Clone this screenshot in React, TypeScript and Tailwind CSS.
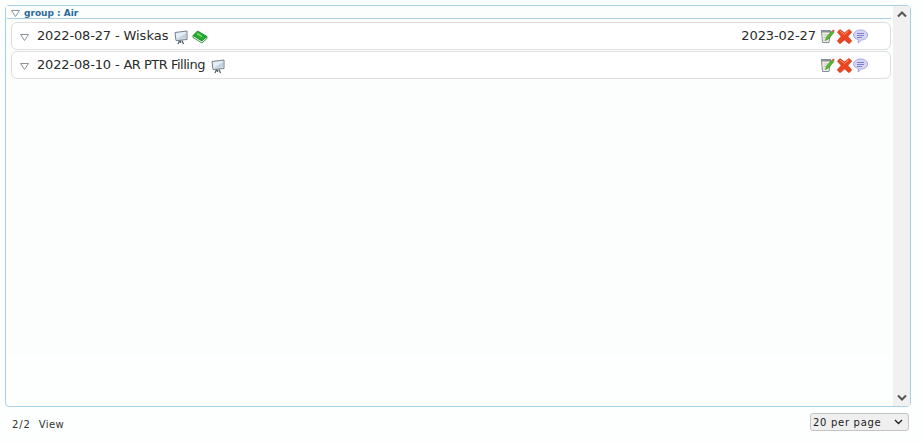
import React from "react";

const Triangle: React.FC<{ className?: string }> = ({ className }) => (
  <svg width="9" height="7" viewBox="0 0 9 7" className={className}>
    <path d="M0.5 0.5H8.5L4.5 6.5Z" fill="#fff" stroke="#8a9299" strokeWidth="1" />
  </svg>
);

const Board: React.FC = () => (
  <svg width="14" height="15" viewBox="0 0 14 15" className="shrink-0">
    <path d="M1 2.5L13 1V9.5L2 10.5Z" fill="#e4edf5" stroke="#75808a" />
    <path d="M3 9L12 3V8.6Z" fill="#c3d2e0" />
    <path d="M6.5 10.5V13M5.5 10.5L4 14M8 10.5L9.5 14" stroke="#59626b" strokeWidth="1.3" fill="none" />
  </svg>
);

const Book: React.FC = () => (
  <svg width="16" height="14" viewBox="0 0 16 14" className="shrink-0">
    <path d="M1 5.5L5.5 1 15 6.5 10 11Z" fill="#22ad2e" stroke="#12801e" strokeWidth="0.8" />
    <path d="M1 5.5V7.5L10 13 15 8.5V6.5L10 11Z" fill="#eef6ea" stroke="#12801e" strokeWidth="0.8" />
    <path d="M5 3.5L10 6.5" stroke="#8fe58f" strokeWidth="1.2" fill="none" />
  </svg>
);

const EditIcon: React.FC = () => (
  <svg width="15" height="15" viewBox="0 0 15 15" className="shrink-0">
    <path d="M1.5 2.5H10.5L9 13.5H2.5Z" fill="#f3efda" stroke="#7f8f9c" />
    <rect x="1" y="1" width="10" height="2.5" fill="#87919b" />
    <path d="M3.5 6h5M3.5 8.5h3M3.5 11h2" stroke="#b5bec6" />
    <path d="M5.5 11.5L6.5 8 12 2 14 3.5 8.5 10Z" fill="#55b92c" stroke="#2e7d18" strokeWidth="0.5" />
    <path d="M12 1.8L13.8 3.2 14.8 1.8 13.2 .6Z" fill="#e0513a" />
  </svg>
);

const DeleteIcon: React.FC = () => (
  <svg width="15" height="15" viewBox="0 0 15 15" className="shrink-0">
    <path
      d="M3 .6L7.5 3.8 12 .4 14.8 3 11 7.5 14.8 12 12 14.8 7.5 11 3 14.8 .2 12 4 7.5 .4 3z"
      fill="#ea4420"
      stroke="#d23a1a"
      strokeWidth="0.6"
    />
    <path d="M3 2.2L7.5 5.4 11.5 2.2" stroke="#f79a78" fill="none" />
  </svg>
);

const CommentIcon: React.FC = () => (
  <svg width="15" height="15" viewBox="0 0 15 15" className="shrink-0">
    <path
      d="M7.5 1C11.5 1 14.5 3 14.5 6S11.5 11 8.5 11L5 14 5.5 10.6C2.5 10 .5 8.4 .5 6S3.5 1 7.5 1z"
      fill="#d4d4f4"
      stroke="#a8a8dc"
    />
    <path d="M4 4.5h7M4 6.5h7M4 8.5h5" stroke="#8080cc" />
  </svg>
);

const Chevron: React.FC<{ up?: boolean }> = ({ up }) => (
  <svg width="10" height="7" viewBox="0 0 10 7">
    <path d={up ? "M1 5.5L5 1.5 9 5.5" : "M1 1.5L5 5.5 9 1.5"} fill="none" stroke="#555" strokeWidth="2" />
  </svg>
);

type RowProps = {
  date: string;
  name: string;
  nameClass: string;
  book?: boolean;
  end?: string;
};

const Row: React.FC<RowProps> = ({ date, name, nameClass, book, end }) => (
  <div className="flex h-[28px] items-center rounded-[6px] border border-[#dcdedf] bg-white pl-[8px] pr-[22px]">
    <Triangle className="mt-[3px]" />
    <span className="ml-[8px] whitespace-pre text-[13px] text-[#2b2b2b]">
      <span className="tracking-[-0.16px]">{date} - </span>
      <span className={nameClass}>{name}</span>
    </span>
    <span className="ml-[6px] mt-[2px]">
      <Board />
    </span>
    {book && (
      <span className="ml-[4px] mt-[1px]">
        <Book />
      </span>
    )}
    <div className="ml-auto flex items-center">
      {end && <span className="mr-[4px] text-[13px] tracking-[-0.08px] text-[#2b2b2b]">{end}</span>}
      <EditIcon />
      <span className="ml-[2px]">
        <DeleteIcon />
      </span>
      <span className="ml-[1px]">
        <CommentIcon />
      </span>
    </div>
  </div>
);

const App: React.FC = () => {
  return (
    <div className="h-[442px] w-[923px] overflow-hidden bg-[#fdfffe] pl-[5px] pr-[12px] pt-[5px] font-['DejaVu_Sans',sans-serif]">
      <div className="flex h-[402px] rounded-[4px] border border-[#a9cfe6] bg-[#fdfefe]">
        <div className="h-[349px] min-w-0 flex-1 bg-[#fbfefc] pl-[1px]">
          <div className="flex h-[13px] items-center border-b border-[#a9cfe6] pl-[4px] pt-[3px]">
            <Triangle />
            <span className="ml-[4px] text-[9px] font-bold text-[#2a6a99]">group : Air</span>
          </div>
          <div className="flex flex-col gap-[1px] pl-[4px] pt-[3px]">
            <Row date="2022-08-27" name="Wiskas" nameClass="" book end="2023-02-27" />
            <Row date="2022-08-10" name="AR PTR Filling" nameClass="tracking-[-0.5px]" />
          </div>
        </div>
        <div className="ml-[2px] flex w-[17px] flex-col items-center justify-between bg-[#f1f1f1] py-[5px]">
          <Chevron up />
          <Chevron />
        </div>
      </div>
      <div className="flex items-center justify-between pl-[7px] pr-[2px] pt-[5px]">
        <div className="mt-[5px] whitespace-pre text-[10px] text-[#333]">
          <span className="tracking-[0.9px]">2/2</span>
          <span className="ml-[8px] tracking-[0.4px]">View</span>
        </div>
        <div className="flex h-[18px] w-[99px] items-center justify-between rounded-[3px] border border-[#c4c4c4] bg-[#efefef] pl-[2px] pr-[5px] text-[10px] tracking-[0.7px] text-[#222]">
          20 per page
          <svg width="9" height="6" viewBox="0 0 9 6">
            <path d="M1 1L4.5 4.5 8 1" fill="none" stroke="#222" strokeWidth="1.4" />
          </svg>
        </div>
      </div>
    </div>
  );
};

export default App;
